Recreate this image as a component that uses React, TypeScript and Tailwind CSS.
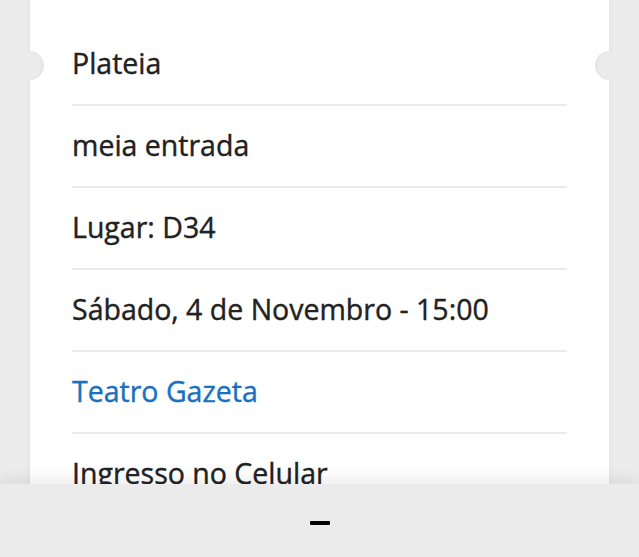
const rows = [
  { label: "Plateia" },
  { label: "meia entrada" },
  { label: "Lugar: D34" },
  { label: "Sábado, 4 de Novembro - 15:00" },
  { label: "Teatro Gazeta", link: true },
  { label: "Ingresso no Celular" },
];

export default function App() {
  return (
    <div className="relative h-[557px] w-full overflow-hidden bg-[#ececec] font-['Open_Sans',sans-serif]">
      <div className="relative mx-[30px] h-full bg-white shadow-[0_0_6px_rgba(0,0,0,0.06)]">
        <div className="absolute left-[-15px] top-[51px] h-[29px] w-[29px] rounded-full bg-[#ececec] shadow-[inset_-2px_0_3px_rgba(0,0,0,0.04)]" />
        <div className="absolute right-[-15px] top-[51px] h-[29px] w-[29px] rounded-full bg-[#ececec] shadow-[inset_2px_0_3px_rgba(0,0,0,0.04)]" />
        <ul className="px-[42px] pt-[24px]">
          {rows.map((r) => (
            <li
              key={r.label}
              className="flex h-[82px] items-center border-b-2 border-[#ebebeb] pb-[2px]"
            >
              <span
                className={
                  r.link
                    ? "text-[28.5px] font-medium text-[#1a70c0] [-webkit-text-stroke:0.4px_currentColor]"
                    : "text-[28.5px] font-medium text-[#222] [-webkit-text-stroke:0.4px_currentColor]"
                }
              >
                {r.label}
              </span>
            </li>
          ))}
        </ul>
      </div>
      <div className="absolute bottom-0 left-0 right-0 flex h-[73px] items-center justify-center bg-[#ebebeb] shadow-[0_-6px_14px_rgba(0,0,0,0.07)]">
        <span className="mt-[4px] h-[4px] w-[20px] rounded-[1px] bg-black" />
      </div>
    </div>
  );
}
